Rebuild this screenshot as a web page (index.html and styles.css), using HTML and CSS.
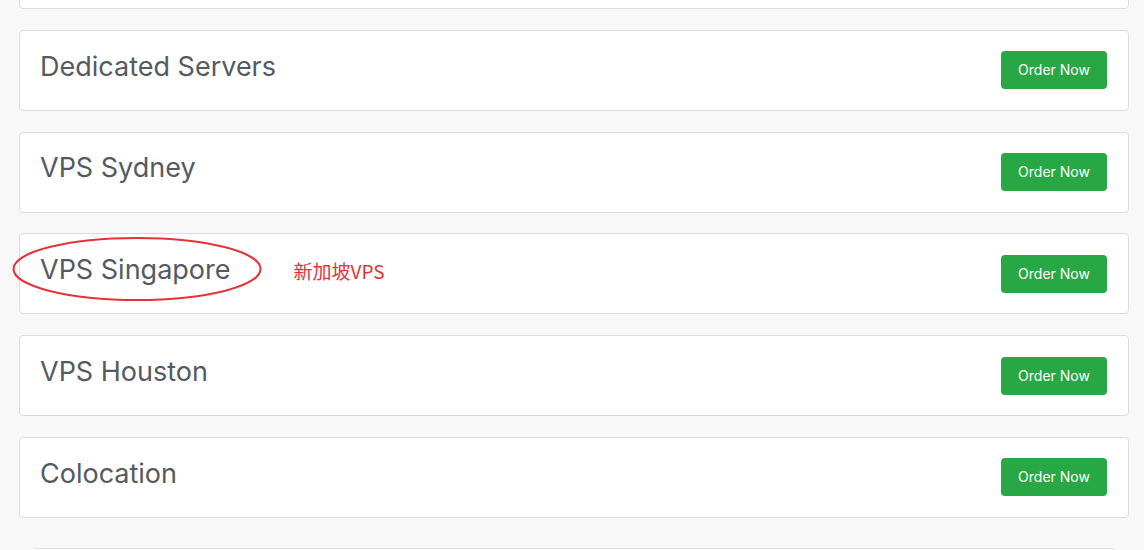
FILE: index.html
```html
<!DOCTYPE html>
<html>
<head>
<meta charset="utf-8">
<link rel="stylesheet" href="styles.css">
</head>
<body>
<div class="list">
  <div class="card"></div>
  <div class="card"><h3 class="title">Dedicated Servers</h3><a class="btn">Order Now</a></div>
  <div class="card"><h3 class="title">VPS Sydney</h3><a class="btn">Order Now</a></div>
  <div class="card highlight">
    <h3 class="title">VPS Singapore</h3>
    <span class="note">新加坡VPS</span>
    <svg class="ellipse" width="250" height="66" viewBox="0 0 250 66"><ellipse cx="125" cy="33" rx="123.5" ry="31" fill="none" stroke="#e2343a" stroke-width="2"/></svg>
    <a class="btn">Order Now</a>
  </div>
  <div class="card"><h3 class="title">VPS Houston</h3><a class="btn">Order Now</a></div>
  <div class="card"><h3 class="title">Colocation</h3><a class="btn">Order Now</a></div>
  <div class="footer-box"></div>
</div>
</body>
</html>
```
FILE: styles.css
```css
html, body {
  margin: 0;
  padding: 0;
  background: #f8f8f8;
  font-family: Inter, "Noto Sans", sans-serif;
  overflow: hidden;
}
.list {
  width: 1110px;
  margin-left: 19px;
  margin-top: -72px;
  display: flex;
  flex-direction: column;
  gap: 20.75px;
}
.card {
  position: relative;
  box-sizing: border-box;
  height: 81px;
  background: #fff;
  border: 1px solid #dcdcdc;
  border-radius: 4px;
  display: flex;
  align-items: center;
  padding: 0 21px 0 20px;
}
.title {
  margin: 0 0 7px 0;
  font-size: 27px;
  font-weight: 400;
  color: #555a61;
  line-height: 1.2;
}
.note {
  margin-left: 63px;
  margin-bottom: 6px;
  color: #e2343a;
  font-size: 19px;
  font-family: "Noto Sans CJK SC", sans-serif;
}
.ellipse {
  position: absolute;
  left: -8px;
  top: 2px;
}
.btn {
  margin-left: auto;
  width: 106px;
  height: 38px;
  box-sizing: border-box;
  background: #28a745;
  color: #fff;
  border-radius: 4px;
  font-size: 14px;
  font-weight: 400;
  display: flex;
  align-items: center;
  justify-content: center;
  padding-bottom: 1px;
}
.footer-box {
  margin: 9px 15px 0;
  height: 40px;
  background: #fff;
  border-top: 1px solid #dedede;
}
```
